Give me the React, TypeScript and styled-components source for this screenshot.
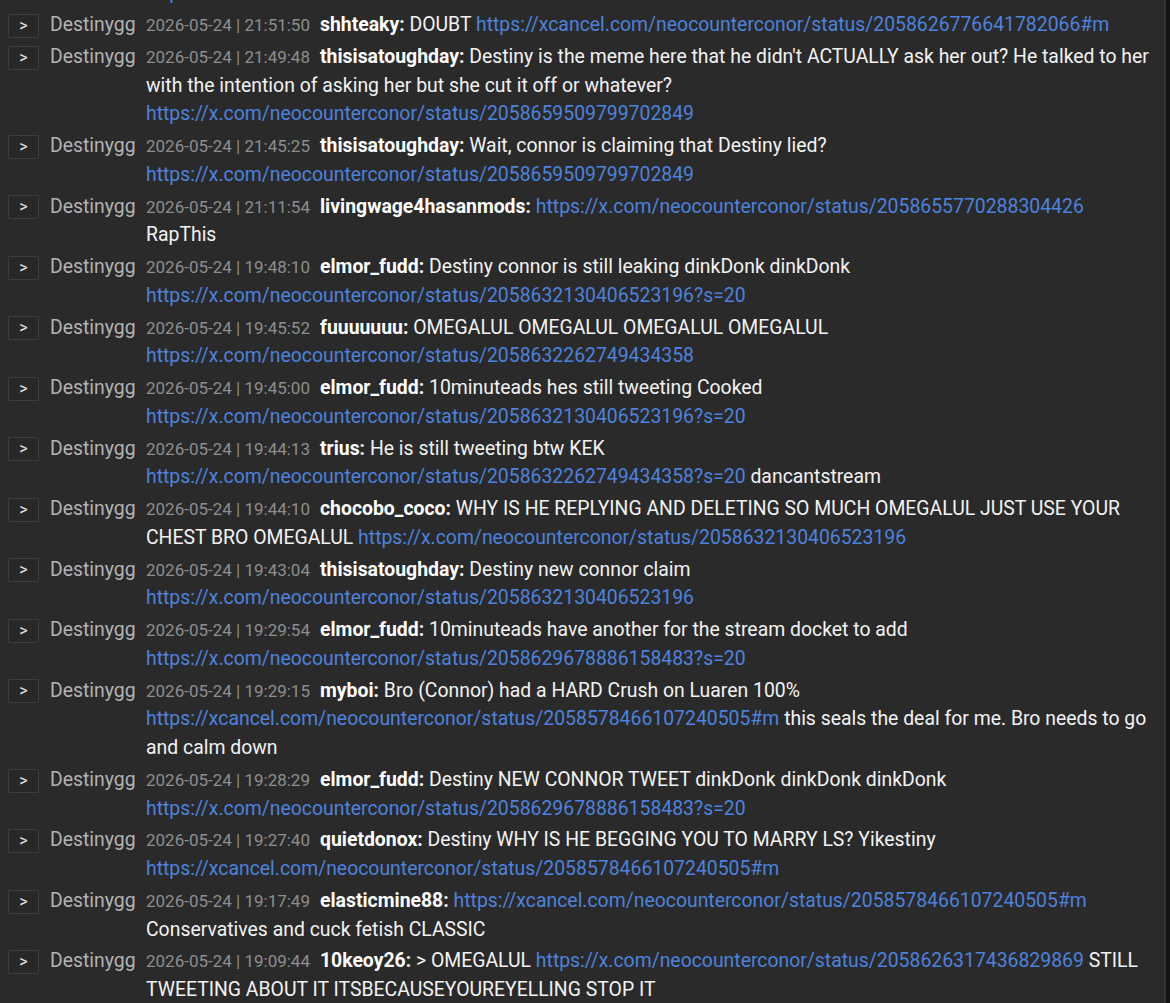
import React from "react";
import styled, { createGlobalStyle } from "styled-components";

const Global = createGlobalStyle`
  html, body { margin: 0; padding: 0; background: #2a2a2a; }
  body { font-family: Roboto, "Noto Sans", "Liberation Sans", sans-serif; }
`;

const Page = styled.div`
  display: flex;
  height: 1003px;
  width: 1170px;
  background: #2a2a2a;
  overflow: hidden;
`;

const Viewport = styled.div`
  flex: 1;
  height: 100%;
  overflow: hidden;
  padding-right: 9px;
`;

const Track = styled.div`
  width: 4px;
  flex: none;
  background: #151515;
  border-left: 2px solid #333333;
`;

/* the log is scrolled: the previous message is partly above the top edge */
const List = styled.div`
  display: flex;
  flex-direction: column;
  margin-top: -50.8px;
`;

const Row = styled.div`
  display: flex;
  align-items: flex-start;
  padding: 1.6px 0 1.6px 8px;
  line-height: 28.65px;
`;

const Expand = styled.button`
  flex: none;
  width: 31px;
  height: 24px;
  margin-top: 2.6px;
  padding: 0;
  box-sizing: border-box;
  border: 1px solid #3d3d3d;
  border-radius: 1px;
  background: #282828;
  color: #e6e6e6;
  font-family: Roboto, "Liberation Sans", sans-serif;
  font-size: 16px;
  line-height: 22px;
  text-align: center;
`;

const Channel = styled.span`
  flex: none;
  margin-left: 11px;
  width: 85px;
  color: #b3b3b3;
  font-size: 19.4px;
  white-space: nowrap;
`;

const Body = styled.div`
  flex: 1;
  min-width: 0;
  margin-left: 11px;
  color: #f2f2f2;
  font-size: 19.4px;
`;

const Time = styled.span`
  color: #8e8e8e;
  font-size: 17px;
  line-height: 1;
  margin-right: 10px;
`;

const User = styled.span`
  font-weight: 700;
  color: #ffffff;
`;

const Link = styled.a`
  color: #4d82de;
  text-decoration: none;
`;

type Msg = { time: string; user: string; text: string };

const previous: Msg = {
  time: "21:55:12",
  user: "shhteaky",
  text: "connor is still posting about it, he deleted the last one too LULW https://x.com/neocounterconor/status/2058626776641782066",
};

const messages: Msg[] = [
  {
    time: "21:51:50",
    user: "shhteaky",
    text: "DOUBT https://xcancel.com/neocounterconor/status/2058626776641782066#m",
  },
  {
    time: "21:49:48",
    user: "thisisatoughday",
    text: "Destiny is the meme here that he didn't ACTUALLY ask her out? He talked to her with the intention of asking her but she cut it off or whatever? https://x.com/neocounterconor/status/2058659509799702849",
  },
  {
    time: "21:45:25",
    user: "thisisatoughday",
    text: "Wait, connor is claiming that Destiny lied? https://x.com/neocounterconor/status/2058659509799702849",
  },
  {
    time: "21:11:54",
    user: "livingwage4hasanmods",
    text: "https://x.com/neocounterconor/status/2058655770288304426 RapThis",
  },
  {
    time: "19:48:10",
    user: "elmor_fudd",
    text: "Destiny connor is still leaking dinkDonk dinkDonk https://x.com/neocounterconor/status/2058632130406523196?s=20",
  },
  {
    time: "19:45:52",
    user: "fuuuuuuu",
    text: "OMEGALUL OMEGALUL OMEGALUL OMEGALUL https://x.com/neocounterconor/status/2058632262749434358",
  },
  {
    time: "19:45:00",
    user: "elmor_fudd",
    text: "10minuteads hes still tweeting Cooked https://x.com/neocounterconor/status/2058632130406523196?s=20",
  },
  {
    time: "19:44:13",
    user: "trius",
    text: "He is still tweeting btw KEK https://x.com/neocounterconor/status/2058632262749434358?s=20 dancantstream",
  },
  {
    time: "19:44:10",
    user: "chocobo_coco",
    text: "WHY IS HE REPLYING AND DELETING SO MUCH OMEGALUL JUST USE YOUR CHEST BRO OMEGALUL https://x.com/neocounterconor/status/2058632130406523196",
  },
  {
    time: "19:43:04",
    user: "thisisatoughday",
    text: "Destiny new connor claim https://x.com/neocounterconor/status/2058632130406523196",
  },
  {
    time: "19:29:54",
    user: "elmor_fudd",
    text: "10minuteads have another for the stream docket to add https://x.com/neocounterconor/status/2058629678886158483?s=20",
  },
  {
    time: "19:29:15",
    user: "myboi",
    text: "Bro (Connor) had a HARD Crush on Luaren 100% https://xcancel.com/neocounterconor/status/2058578466107240505#m this seals the deal for me. Bro needs to go and calm down",
  },
  {
    time: "19:28:29",
    user: "elmor_fudd",
    text: "Destiny NEW CONNOR TWEET dinkDonk dinkDonk dinkDonk https://x.com/neocounterconor/status/2058629678886158483?s=20",
  },
  {
    time: "19:27:40",
    user: "quietdonox",
    text: "Destiny WHY IS HE BEGGING YOU TO MARRY LS? Yikestiny https://xcancel.com/neocounterconor/status/2058578466107240505#m",
  },
  {
    time: "19:17:49",
    user: "elasticmine88",
    text: "https://xcancel.com/neocounterconor/status/2058578466107240505#m Conservatives and cuck fetish CLASSIC",
  },
  {
    time: "19:09:44",
    user: "10keoy26",
    text: "> OMEGALUL https://x.com/neocounterconor/status/2058626317436829869 STILL TWEETING ABOUT IT ITSBECAUSEYOUREYELLING STOP IT",
  },
];

function renderText(text: string) {
  const tokens = text.split(" ");
  const out: React.ReactNode[] = [];
  tokens.forEach((tok, i) => {
    if (i > 0) out.push(" ");
    if (tok.startsWith("http")) {
      out.push(
        <Link key={i} href={tok}>
          {tok}
        </Link>
      );
    } else {
      out.push(tok);
    }
  });
  return out;
}

function MessageRow({ m }: { m: Msg }) {
  return (
    <Row>
      <Expand>&gt;</Expand>
      <Channel>Destinygg</Channel>
      <Body>
        <Time>2026-05-24 | {m.time}</Time>
        <User>{m.user}:</User> {renderText(m.text)}
      </Body>
    </Row>
  );
}

export default function App() {
  return (
    <>
      <Global />
      <Page>
        <Viewport>
          <List>
            <MessageRow m={previous} />
            {messages.map((m, i) => (
              <MessageRow key={i} m={m} />
            ))}
          </List>
        </Viewport>
        <Track />
      </Page>
    </>
  );
}
